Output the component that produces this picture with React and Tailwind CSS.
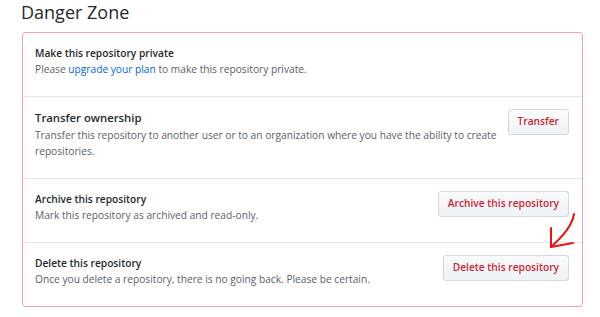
import React from 'react';

const font = { fontFamily: '"Open Sans", "Noto Sans", sans-serif' };

const rows = [
  {
    title: 'Make this repository private',
    desc: (
      <>
        Please <a className="text-[#0366d6]">upgrade your plan</a> to make this repository private.
      </>
    ),
  },
  {
    title: 'Transfer ownership',
    big: true,
    desc: 'Transfer this repository to another user or to an organization where you have the ability to create repositories.',
    button: 'Transfer',
  },
  {
    title: 'Archive this repository',
    desc: 'Mark this repository as archived and read-only.',
    button: 'Archive this repository',
  },
  {
    title: 'Delete this repository',
    desc: 'Once you delete a repository, there is no going back. Please be certain.',
    button: 'Delete this repository',
  },
];

const Row = ({ row, last }) => (
  <div className={`flex items-start gap-[8px] pl-[12px] pr-[13px] pt-[12px] pb-[19px] ${last ? '' : 'border-b border-[#e6e6e6]'}`}>
    <div className="flex-1">
      <div className={`text-[#24292e] font-semibold ${row.big ? 'text-[11.3px] leading-[18px]' : 'text-[10.2px] leading-[16px]'}`}>
        {row.title}
      </div>
      <p className="text-[#586069] text-[10.2px] leading-[16px]">{row.desc}</p>
    </div>
    {row.button && (
      <button className="shrink-0 h-[26px] px-[9px] rounded-[3px] border border-[#d5d8db] bg-gradient-to-b from-[#fafbfc] to-[#eff3f6] text-[#cb2431] text-[10.2px] font-semibold">
        {row.button}
      </button>
    )}
  </div>
);

export default function App() {
  return (
    <div className="relative w-[600px] h-[317px] bg-white" style={font}>
      <h2 className="pl-[21px] text-[18px] leading-[24px] text-[#24292e] font-normal h-[32px]">Danger Zone</h2>
      <div className="ml-[22px] w-[561px] border border-[#eda6ac] rounded-[3px]">
        {rows.map((row, i) => (
          <Row key={i} row={row} last={i === rows.length - 1} />
        ))}
      </div>
      <svg className="absolute inset-0 pointer-events-none" width="600" height="317">
        <path d="M574 214 C572 226, 563 236, 551 247" fill="none" stroke="#ee1111" strokeWidth="2" strokeLinecap="round" />
        <path d="M551 228 L551 247 L573 243" fill="none" stroke="#ee1111" strokeWidth="2" strokeLinecap="round" strokeLinejoin="round" />
      </svg>
    </div>
  );
}
